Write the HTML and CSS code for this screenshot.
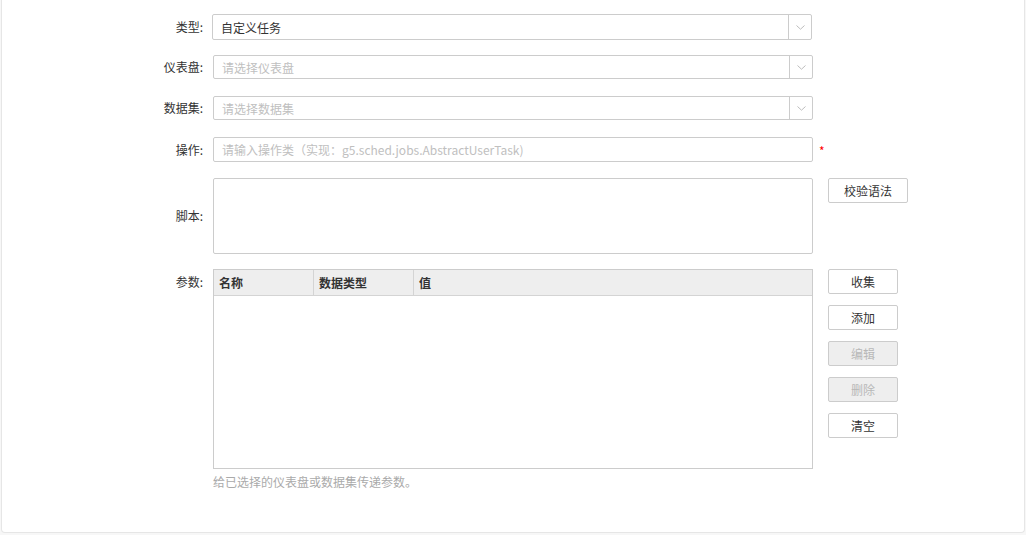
FILE: index.html
```html
<!DOCTYPE html>
<html lang="zh">
<head>
<meta charset="utf-8">
<title>自定义任务</title>
<link rel="stylesheet" href="styles.css">
</head>
<body>
<div class="panel">
  <div class="form">
    <div class="row row-type">
      <div class="label">类型:</div>
      <div class="select select-type">
        <div class="select-text value">自定义任务</div>
        <div class="select-arrow"><svg width="9" height="5" viewBox="0 0 9 5"><path d="M0.5 0.5 L4.5 4.2 L8.5 0.5" fill="none" stroke="#bdbdbd" stroke-width="1"/></svg></div>
      </div>
    </div>
    <div class="row">
      <div class="label">仪表盘:</div>
      <div class="select">
        <div class="select-text placeholder">请选择仪表盘</div>
        <div class="select-arrow"><svg width="9" height="5" viewBox="0 0 9 5"><path d="M0.5 0.5 L4.5 4.2 L8.5 0.5" fill="none" stroke="#bdbdbd" stroke-width="1"/></svg></div>
      </div>
    </div>
    <div class="row">
      <div class="label">数据集:</div>
      <div class="select">
        <div class="select-text placeholder">请选择数据集</div>
        <div class="select-arrow"><svg width="9" height="5" viewBox="0 0 9 5"><path d="M0.5 0.5 L4.5 4.2 L8.5 0.5" fill="none" stroke="#bdbdbd" stroke-width="1"/></svg></div>
      </div>
    </div>
    <div class="row row-op">
      <div class="label">操作:</div>
      <div class="input"><span class="placeholder">请输入操作类（实现：g5.sched.jobs.AbstractUserTask)</span></div>
      <span class="required">*</span>
    </div>
    <div class="row row-script">
      <div class="label">脚本:</div>
      <div class="textarea"></div>
      <div class="side">
        <button class="btn btn-wide">校验语法</button>
      </div>
    </div>
    <div class="row row-params">
      <div class="label label-top">参数:</div>
      <div class="param-col">
        <div class="table">
          <div class="thead">
            <div class="th th-name">名称</div>
            <div class="th th-type">数据类型</div>
            <div class="th th-value">值</div>
          </div>
          <div class="tbody"></div>
        </div>
        <div class="hint">给已选择的仪表盘或数据集传递参数。</div>
      </div>
      <div class="side side-buttons">
        <button class="btn">收集</button>
        <button class="btn">添加</button>
        <button class="btn disabled">编辑</button>
        <button class="btn disabled">删除</button>
        <button class="btn">清空</button>
      </div>
    </div>
  </div>
</div>
</body>
</html>
```

FILE: styles.css
```css
html, body {
  margin: 0;
  padding: 0;
  background: #f7f7f7;
}
body {
  font-family: "Noto Sans CJK SC", "Liberation Sans", sans-serif;
  font-size: 12px;
  color: #333;
}
.panel {
  box-sizing: border-box;
  margin-left: 1px;
  width: 1024px;
  height: 533px;
  background: #fff;
  border: 1px solid #e6e6e6;
  border-top: none;
  border-radius: 0 0 4px 4px;
}
.form {
  padding-top: 14px;
}
.row {
  display: flex;
  align-items: center;
  margin-bottom: 17px;
}
.row-type { margin-bottom: 15px; }
.row-op { margin-bottom: 16px; }
.row-script { margin-bottom: 15px; align-items: flex-start; }
.row-params { align-items: flex-start; }
.label {
  width: 201px;
  flex: none;
  text-align: right;
  margin-right: 10px;
  line-height: 16px;
  color: #333;
}
.row-script .label {
  align-self: center;
}
.label-top {
  line-height: 26px;
}
.select {
  box-sizing: border-box;
  width: 600px;
  height: 24px;
  border: 1px solid #cccccc;
  border-radius: 2px;
  display: flex;
  background: #fff;
}
.select-type {
  height: 26px;
  margin-left: -1px;
}
.select-text {
  flex: 1;
  padding-left: 8px;
  display: flex;
  align-items: center;
}
.value { color: #333; }
.placeholder { color: #c0c0c0; }
.select-arrow {
  width: 22px;
  border-left: 1px solid #cccccc;
  display: flex;
  align-items: center;
  justify-content: center;
}
.input {
  box-sizing: border-box;
  width: 600px;
  height: 25px;
  border: 1px solid #cccccc;
  border-radius: 2px;
  padding-left: 8px;
  display: flex;
  align-items: center;
}
.required {
  color: #ff0000;
  margin-left: 6px;
  font-size: 12px;
  line-height: 12px;
  margin-top: 2px;
}
.textarea {
  box-sizing: border-box;
  width: 600px;
  height: 76px;
  border: 1px solid #cccccc;
  border-radius: 2px;
}
.side {
  margin-left: 15px;
  display: flex;
  flex-direction: column;
  gap: 11px;
}
.btn {
  box-sizing: border-box;
  width: 70px;
  height: 25px;
  padding: 0;
  border: 1px solid #cccccc;
  border-radius: 2px;
  background: #fff;
  color: #333;
  font-family: inherit;
  font-size: 12px;
  line-height: 23px;
  text-align: center;
}
.btn-wide { width: 80px; }
.btn.disabled {
  background: #eeeeee;
  color: #b8b8b8;
}
.param-col {
  width: 600px;
}
.table {
  box-sizing: border-box;
  width: 600px;
  height: 200px;
  border: 1px solid #cccccc;
}
.thead {
  display: flex;
  height: 25px;
  background: #eeeeee;
  border-bottom: 1px solid #d4d4d4;
}
.th {
  box-sizing: border-box;
  padding-left: 5px;
  font-weight: bold;
  line-height: 25px;
  color: #333;
}
.th-name { width: 100px; border-right: 1px solid #d4d4d4; }
.th-type { width: 100px; border-right: 1px solid #d4d4d4; }
.th-value { flex: 1; }
.hint {
  margin-top: 5px;
  color: #aaaaaa;
  line-height: 16px;
}
```
